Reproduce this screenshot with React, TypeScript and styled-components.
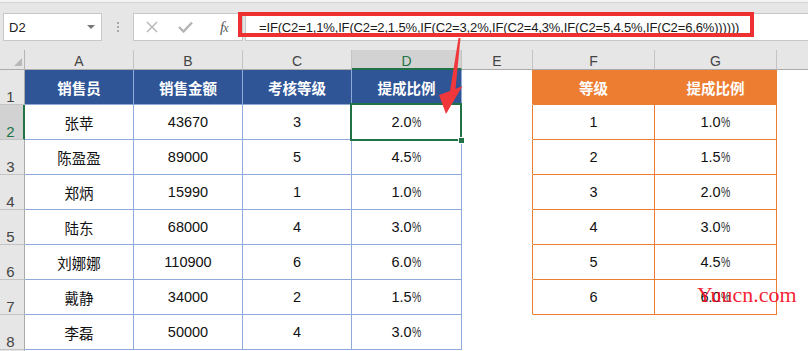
import React from "react";
import styled, { createGlobalStyle, css } from "styled-components";

const Global = createGlobalStyle`
  html, body { margin: 0; padding: 0; background: #fff; overflow: hidden; }
  body { font-family: "Liberation Sans", "Noto Sans CJK SC", sans-serif; }
`;

const Root = styled.div`
  position: relative;
  width: 808px;
  height: 351px;
  overflow: hidden;
  background: #fff;
`;

const Toolbar = styled.div`
  height: 50px;
  box-sizing: border-box;
  background: #e6e6e6;
  box-shadow: inset 0 2px 0 #f3f3f3, inset 0 3px 0 #d4d4d4;
  display: flex;
  align-items: flex-start;
  padding: 13px 0 0 3px;
`;

const Field = styled.div`
  height: 28px;
  box-sizing: border-box;
  background: #fff;
  border: 1px solid #c8c8c8;
  display: flex;
  align-items: center;
`;

const NameBox = styled(Field)`
  width: 99px;
  padding: 0 6px 0 5px;
  justify-content: space-between;
  font-size: 13px;
  color: #222;
`;

const Caret = styled.span`
  width: 0;
  height: 0;
  border-left: 4px solid transparent;
  border-right: 4px solid transparent;
  border-top: 4px solid #777;
`;

const Grip = styled.div`
  width: 31px;
  height: 28px;
  display: flex;
  flex-direction: column;
  align-items: center;
  justify-content: center;
  gap: 2px;
`;

const Dot = styled.span`
  width: 2px;
  height: 2px;
  background: #a8a8a8;
`;

const FnBox = styled(Field)`
  width: 110px;
  padding-left: 12px;
  gap: 0;
`;

const IconSlot = styled.span<{ $gap: number }>`
  display: flex;
  align-items: center;
  margin-right: ${(p) => p.$gap}px;
`;

const Fx = styled.span`
  font-family: "Liberation Serif", serif;
  font-style: italic;
  font-size: 15px;
  color: #555;
  letter-spacing: -1px;
  i { font-size: 12px; }
`;

const FormulaInput = styled(Field)`
  flex: 1;
  margin-left: 2px;
  border-right: none;
  padding-left: 13px;
  font-size: 13px;
  letter-spacing: -0.15px;
  color: #1a1a1a;
  white-space: nowrap;
`;

const Sheet = styled.div`
  display: grid;
  grid-template-columns: 25px 109px 109px 109px 110px 71px 122px 122px 32px;
  grid-template-rows: 20px repeat(9, 35px);
`;

const Corner = styled.div`
  box-sizing: border-box;
  background: #e6e6e6;
  border-right: 1px solid #b5b5b5;
  border-bottom: 1px solid #ababab;
  display: flex;
  justify-content: flex-end;
  align-items: flex-end;
  padding: 0 2px 3px 0;
`;

const CornerTri = styled.span`
  width: 0;
  height: 0;
  border-left: 8px solid transparent;
  border-bottom: 8px solid #b9b9b9;
`;

const ColHead = styled.div<{ $active?: boolean }>`
  box-sizing: border-box;
  background: ${(p) => (p.$active ? "#d2d2d2" : "#e6e6e6")};
  border-right: 1px solid #c3c3c3;
  border-bottom: ${(p) => (p.$active ? "2px solid #217346" : "1px solid #ababab")};
  color: ${(p) => (p.$active ? "#217346" : "#444")};
  font-size: 14px;
  display: flex;
  align-items: center;
  justify-content: center;
  padding-top: 3px;
`;

const RowHead = styled.div<{ $active?: boolean }>`
  box-sizing: border-box;
  background: ${(p) => (p.$active ? "#d2d2d2" : "#e6e6e6")};
  border-right: ${(p) => (p.$active ? "2px solid #217346" : "1px solid #ababab")};
  border-bottom: 1px solid #c3c3c3;
  color: ${(p) => (p.$active ? "#217346" : "#444")};
  font-size: 15px;
  line-height: 14px;
  display: flex;
  align-items: flex-end;
  justify-content: center;
  padding-right: ${(p) => (p.$active ? "2px" : "3px")};
`;

type Variant = "blueHead" | "blue" | "orangeHead" | "orange" | "edge" | "plain";

const variants: Record<Variant, ReturnType<typeof css>> = {
  blueHead: css`
    background: #2f5597;
    color: #fff;
    font-weight: bold;
    border-color: #8eaadb;
  `,
  blue: css`
    border-color: #8eaadb;
  `,
  orangeHead: css`
    background: #ed7d31;
    color: #fff;
    font-weight: bold;
    border-color: #ed7d31;
  `,
  orange: css`
    border-color: #ed7d31;
  `,
  edge: css`
    border-bottom-color: #fff;
    border-right-color: #ed7d31;
  `,
  plain: css`
    border-color: #fff;
  `,
};

const Cell = styled.div<{ $v: Variant; $selected?: boolean }>`
  position: relative;
  box-sizing: border-box;
  border-right: 1px solid;
  border-bottom: 1px solid;
  background: #fff;
  color: #111;
  font-size: 14.5px;
  display: flex;
  align-items: center;
  justify-content: center;
  ${(p) => variants[p.$v]}
  ${(p) =>
    p.$selected &&
    css`
      &::after {
        content: "";
        position: absolute;
        left: -2px;
        top: -2px;
        right: -1px;
        bottom: -2px;
        border: 2px solid #217346;
        z-index: 2;
      }
      &::before {
        content: "";
        position: absolute;
        right: -4px;
        bottom: -5px;
        width: 5px;
        height: 5px;
        background: #217346;
        border: 1px solid #fff;
        z-index: 3;
      }
    `}
`;

const Pct = styled.span`
  display: inline-block;
  transform: scaleX(0.72);
  transform-origin: left center;
  margin-right: -3px;
  color: #333;
`;

const RedBox = styled.div`
  position: absolute;
  left: 238px;
  top: 12px;
  width: 516px;
  height: 25px;
  box-sizing: border-box;
  border: 4px solid #ef3030;
`;

const Arrow = styled.svg`
  position: absolute;
  left: 435px;
  top: 36px;
  width: 30px;
  height: 80px;
  z-index: 5;
`;

const Watermark = styled.div`
  position: absolute;
  left: 697px;
  top: 284px;
  font-family: "Liberation Serif", serif;
  font-size: 22px;
  line-height: 22px;
  color: rgba(245, 10, 30, 0.92);
  z-index: 6;
`;

const blueData = [
  ["销售员", "销售金额", "考核等级", "提成比例"],
  ["张苹", "43670", "3", "2.0%"],
  ["陈盈盈", "89000", "5", "4.5%"],
  ["郑炳", "15990", "1", "1.0%"],
  ["陆东", "68000", "4", "3.0%"],
  ["刘娜娜", "110900", "6", "6.0%"],
  ["戴静", "34000", "2", "1.5%"],
  ["李磊", "50000", "4", "3.0%"],
];

const orangeData = [
  ["等级", "提成比例"],
  ["1", "1.0%"],
  ["2", "1.5%"],
  ["3", "2.0%"],
  ["4", "3.0%"],
  ["5", "4.5%"],
  ["6", "6.0%"],
];

const cols = ["A", "B", "C", "D", "E", "F", "G", ""];

function Value({ text }: { text: string }) {
  if (text.endsWith("%")) {
    return (
      <span>
        {text.slice(0, -1)}
        <Pct>%</Pct>
      </span>
    );
  }
  return <span>{text}</span>;
}

export default function App() {
  const rows = [];
  for (let r = 0; r < 9; r++) {
    const cells = [];
    cells.push(
      <RowHead key="h" $active={r === 1}>
        {r + 1}
      </RowHead>
    );
    for (let c = 0; c < 4; c++) {
      const b = blueData[r];
      if (b) {
        cells.push(
          <Cell key={"b" + c} $v={r === 0 ? "blueHead" : "blue"} $selected={r === 1 && c === 3}>
            <Value text={b[c]} />
          </Cell>
        );
      } else {
        cells.push(<Cell key={"b" + c} $v="plain" />);
      }
    }
    cells.push(<Cell key="e" $v={r < 7 ? "edge" : "plain"} />);
    for (let c = 0; c < 2; c++) {
      const o = orangeData[r];
      if (o) {
        cells.push(
          <Cell key={"o" + c} $v={r === 0 ? "orangeHead" : "orange"}>
            <Value text={o[c]} />
          </Cell>
        );
      } else {
        cells.push(<Cell key={"o" + c} $v="plain" />);
      }
    }
    cells.push(<Cell key="h2" $v="plain" />);
    rows.push(<React.Fragment key={r}>{cells}</React.Fragment>);
  }

  return (
    <Root>
      <Global />
      <Toolbar>
        <NameBox>
          <span>D2</span>
          <Caret />
        </NameBox>
        <Grip>
          <Dot />
          <Dot />
          <Dot />
        </Grip>
        <FnBox>
          <IconSlot $gap={20}>
            <svg width="12" height="12" viewBox="0 0 12 12">
              <path d="M1 1 L11 11 M11 1 L1 11" stroke="#b4b4b4" strokeWidth="1.4" fill="none" />
            </svg>
          </IconSlot>
          <IconSlot $gap={27}>
            <svg width="15" height="12" viewBox="0 0 15 12">
              <path d="M1 6 L5.5 10.5 L14 1.5" stroke="#b4b4b4" strokeWidth="2.4" fill="none" />
            </svg>
          </IconSlot>
          <Fx>
            f<i>x</i>
          </Fx>
        </FnBox>
        <FormulaInput>=IF(C2=1,1%,IF(C2=2,1.5%,IF(C2=3,2%,IF(C2=4,3%,IF(C2=5,4.5%,IF(C2=6,6%))))))</FormulaInput>
      </Toolbar>
      <Sheet>
        <Corner>
          <CornerTri />
        </Corner>
        {cols.map((c, i) => (
          <ColHead key={i} $active={c === "D"}>
            {c}
          </ColHead>
        ))}
        {rows}
      </Sheet>
      <RedBox />
      <Arrow viewBox="0 0 30 80">
        <polygon
          points="23.5,2 25.5,2 20.5,53 27.5,50 11,78 4,59 15,55"
          fill="#f0373c"
        />
      </Arrow>
      <Watermark>Yuucn.com</Watermark>
    </Root>
  );
}
